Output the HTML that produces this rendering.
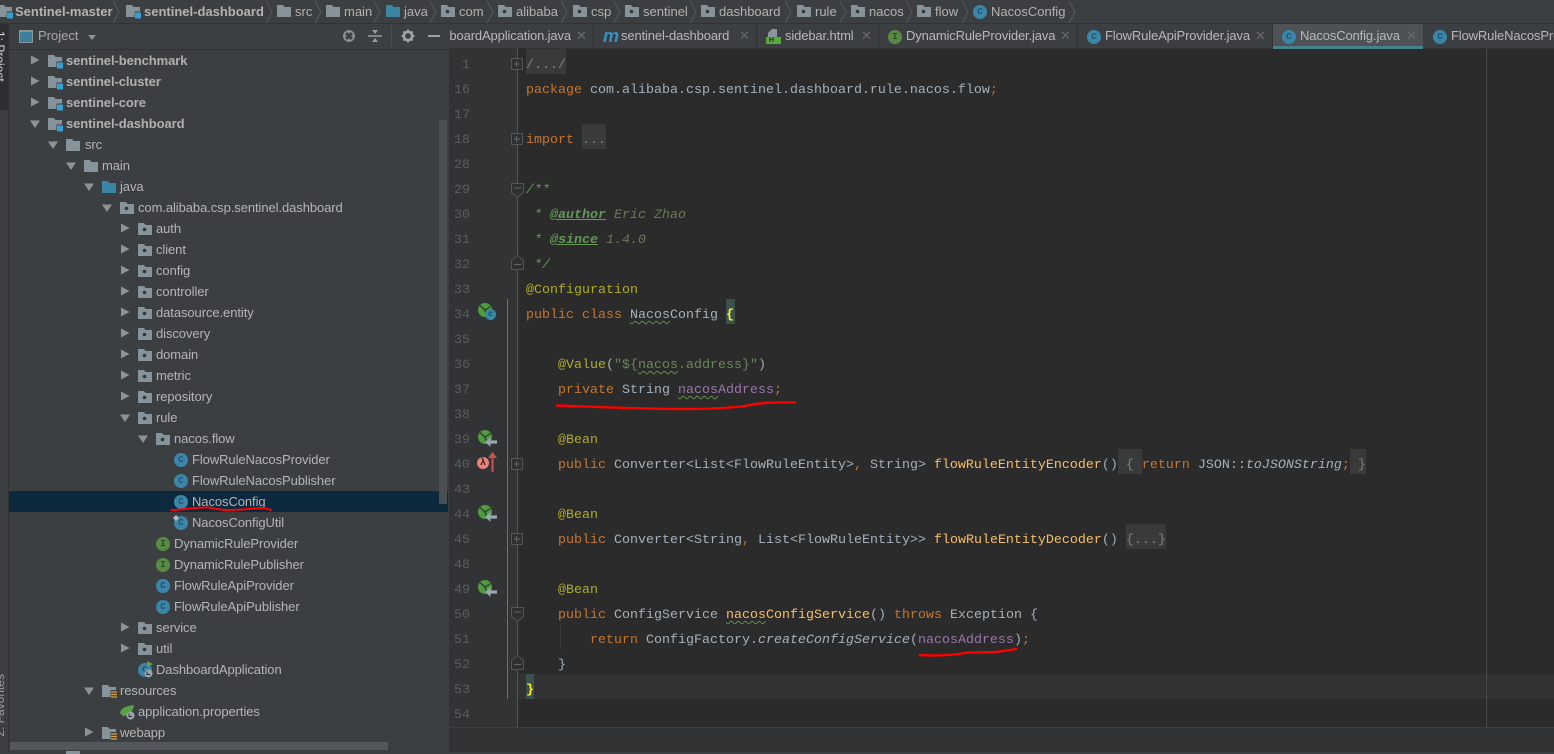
<!DOCTYPE html>
<html><head><meta charset="utf-8"><title>NacosConfig</title>
<style>
html,body{margin:0;padding:0;background:#3c3f41}
body{position:relative;width:1554px;height:752px;overflow:hidden;font-family:"Liberation Sans",sans-serif;font-size:13px;color:#bbb}
.a{position:absolute}
.bc{position:absolute;top:3px;height:18px;line-height:18px;white-space:nowrap;color:#b3b3b3}
.bc.b{font-weight:bold}
.tab{position:absolute;top:27px;height:18px;line-height:18px;white-space:nowrap;color:#b8b8b8;letter-spacing:-.13px}
.x{position:absolute;top:26px;height:20px;line-height:20px;color:#686b6d;font-size:13px}
.dv{position:absolute;top:24px;width:1px;height:24px;background:#323232}
.r{position:absolute;height:21px;line-height:22px;white-space:nowrap;color:#b5b5b5;letter-spacing:-.08px}
.r.b{font-weight:bold;color:#b0b0b0}
.c,.i{position:absolute;width:14px;height:14px;border-radius:50%;font:bold 9px/14px "Liberation Mono",monospace;text-align:center;color:#24536e;background:#3b86a8}
.i{background:#598a44;color:#2c4a24}
.ln{position:absolute;left:449px;width:21px;text-align:right;height:25px;font:13.33px/34px "Liberation Mono",monospace;color:#5a5d5f}
.cd{position:absolute;left:526px;height:25px;white-space:pre;font:13.33px/34px "Liberation Mono",monospace;color:#a3b0bd}
.k{color:#c5762f}.n{color:#b0aa28}.s{color:#6a8759}.f{color:#9876aa}.m{color:#f5be69}
.j{color:#629755;font-style:italic}.jt{font-weight:bold;text-decoration:underline}.jv{color:#6b7a56}
.it{font-style:italic}.dim{color:#808080}
.w{text-decoration:underline wavy #5f8f4f 1px;text-underline-offset:2px}
.fb{position:absolute;background:#393a3a;height:25px}
svg{position:absolute;overflow:visible}
.fold{position:absolute;left:511px;width:12px;height:12px;border:1px solid #555;background:#2f3032;box-sizing:border-box}
.fold:before{content:"";position:absolute;left:2px;top:4px;width:6px;height:2px;background:#666;transform:scaleY(.5)}
.fold.p:after{content:"";position:absolute;left:4px;top:2px;height:6px;width:1px;background:#666}
</style></head><body>
<svg width="0" height="0" style="position:absolute"><defs>
<symbol id="fo" viewBox="0 0 14 12"><path d="M0 0H6L7.500 2H14V12H0Z" fill="#87939a"/></symbol>
<symbol id="fb" viewBox="0 0 14 12"><path d="M0 0H6L7.500 2H14V12H0Z" fill="#3d85a4"/></symbol>
<symbol id="pk" viewBox="0 0 14 12"><path d="M0 0H6L7.500 2H14V12H0Z" fill="#87939a"/><circle cx="6.500" cy="6.500" r="1.800" fill="#33373a"/></symbol>
<symbol id="mo" viewBox="0 0 15 14"><path d="M0 0H6L7.500 2H14V12H0Z" fill="#87939a"/><rect x="8.500" y="6.500" width="6.500" height="7.500" fill="#3c3f41"/><rect x="9" y="7.500" width="6" height="6" fill="#389fd6"/></symbol>
<symbol id="re" viewBox="0 0 15 14"><path d="M0 0H6L7.500 2H14V12H0Z" fill="#87939a"/><rect x="8.500" y="5" width="6.500" height="9" fill="#3c3f41"/><path d="M9 7H15M9 9.500H15M9 12H15" stroke="#d9a343" stroke-width="1.300"/></symbol>
<symbol id="ar" viewBox="0 0 9 10"><path d="M0 .5L8.500 5L0 9.500Z" fill="#8f9294"/></symbol>
<symbol id="ad" viewBox="0 0 10 9"><path d="M0 1.500H10L5 9Z" fill="#8f9294"/></symbol>
<symbol id="sp" viewBox="0 0 14 14"><circle cx="7" cy="7" r="7" fill="#4f9b3f"/><path d="M2 2.500L7 7L12.500 3.500M7 7L9 13" stroke="#2f3a2e" stroke-width="1.300" fill="none"/></symbol>
<symbol id="ov" viewBox="0 0 11 9"><path d="M0 4.500L5 0V3H11V6H5V9Z" fill="#9aa7b0"/></symbol>
</defs></svg>

<!-- top breadcrumb -->
<div class="a" style="left:0;top:0;width:1554px;height:24px;background:#3c3f41"></div>
<div class="a" style="left:0;top:23px;width:1554px;height:1px;background:#323232"></div>
<svg style="left:-2px;top:5px" width="15" height="14"><use href="#mo"/></svg>
<div class="bc b" style="left:15px">Sentinel-master</div>
<svg style="left:126px;top:5px" width="15" height="14"><use href="#mo"/></svg>
<div class="bc b" style="left:144px">sentinel-dashboard</div>
<svg style="left:277px;top:5px" width="14" height="12"><use href="#fo"/></svg><div class="bc" style="left:295px">src</div>
<svg style="left:326px;top:5px" width="14" height="12"><use href="#fo"/></svg><div class="bc" style="left:344px">main</div>
<svg style="left:386px;top:5px" width="14" height="12"><use href="#fb"/></svg><div class="bc" style="left:404px">java</div>
<svg style="left:441px;top:5px" width="14" height="12"><use href="#pk"/></svg><div class="bc" style="left:459px">com</div>
<svg style="left:498px;top:5px" width="14" height="12"><use href="#pk"/></svg><div class="bc" style="left:516px">alibaba</div>
<svg style="left:573px;top:5px" width="14" height="12"><use href="#pk"/></svg><div class="bc" style="left:591px">csp</div>
<svg style="left:625px;top:5px" width="14" height="12"><use href="#pk"/></svg><div class="bc" style="left:643px">sentinel</div>
<svg style="left:701px;top:5px" width="14" height="12"><use href="#pk"/></svg><div class="bc" style="left:719px">dashboard</div>
<svg style="left:797px;top:5px" width="14" height="12"><use href="#pk"/></svg><div class="bc" style="left:815px">rule</div>
<svg style="left:851px;top:5px" width="14" height="12"><use href="#pk"/></svg><div class="bc" style="left:869px">nacos</div>
<svg style="left:917px;top:5px" width="14" height="12"><use href="#pk"/></svg><div class="bc" style="left:935px">flow</div>
<div class="c" style="left:973px;top:5px">C</div><div class="bc" style="left:991px">NacosConfig</div>
<svg style="left:0;top:0" width="1100" height="24" fill="none" stroke="#55585a" stroke-width="1">
<path d="M113 1L119 12L113 23M266 1L272 12L266 23M315 1L321 12L315 23M374 1L380 12L374 23M430 1L436 12L430 23M487 1L493 12L487 23M561 1L567 12L561 23M614 1L620 12L614 23M690 1L696 12L690 23M785 1L791 12L785 23M840 1L846 12L840 23M906 1L912 12L906 23M962 1L968 12L962 23M1069 1L1075 12L1069 23"/></svg>

<!-- left strip -->
<div class="a" style="left:0;top:24px;width:8px;height:728px;background:#3c3f41"></div>
<div class="a" style="left:8px;top:24px;width:1px;height:728px;background:#323232"></div>
<div class="a" style="left:0;top:24px;width:8px;height:86px;background:#2d2f31;overflow:hidden"><div class="a" style="left:-6px;top:7px;writing-mode:vertical-rl;color:#d5d5d5;font-size:12px;line-height:12px;white-space:nowrap">1: Project</div></div>
<div class="a" style="left:0;top:672px;width:8px;height:66px;overflow:hidden"><div class="a" style="left:-6px;top:2px;writing-mode:vertical-rl;transform:rotate(180deg);color:#9a9a9a;font-size:12px;line-height:12px;white-space:nowrap">2: Favorites</div></div>

<!-- project panel header -->
<div class="a" style="left:9px;top:24px;width:440px;height:25px;background:#3c3f41;border-bottom:1px solid #323232"></div>
<div class="a" style="left:19px;top:30px;width:14px;height:13px;box-sizing:border-box;border:1px solid #8b9499;border-top-width:2px;background:#3d7f9c"></div>
<div class="a" style="left:38px;top:27px;line-height:18px;color:#a8a8a8">Project</div>
<svg style="left:88px;top:35px" width="8" height="5"><path d="M0 0H8L4 5Z" fill="#8f9294"/></svg>
<svg style="left:342px;top:29px" width="14" height="14" fill="none" stroke="#8f9294" stroke-width="1.800"><circle cx="7" cy="7" r="5"/><path d="M7 1V4.500M7 9.500V13M1 7H4.500M9.500 7H13"/></svg>
<svg style="left:368px;top:29px" width="14" height="14"><path d="M0 7H14" stroke="#9a9d9f" stroke-width="1.500"/><path d="M4 1H10L7 5ZM4 13H10L7 9Z" fill="#9a9d9f"/></svg>
<div class="a" style="left:391px;top:26px;width:1px;height:20px;background:#4b4e50"></div>
<svg style="left:401px;top:29px" width="14" height="14"><circle cx="7" cy="7" r="4.200" fill="none" stroke="#a0a3a5" stroke-width="2.600"/><path d="M7 .5V3M7 11V13.500M.5 7H3M11 7H13.500M2.400 2.400L4 4M10 10L11.600 11.600M11.600 2.400L10 4M4 10L2.400 11.600" stroke="#a0a3a5" stroke-width="2"/></svg>
<div class="a" style="left:428px;top:35px;width:12px;height:2px;background:#a0a3a5"></div>

<!-- tree -->
<div class="a" style="left:9px;top:491px;width:439px;height:21px;background:#0d293e"></div>
<div class="a" style="left:439px;top:120px;width:8px;height:384px;background:#4f5254;opacity:.9"></div>
<svg style="left:31px;top:55px" width="9" height="10"><use href="#ar"/></svg><svg style="left:48px;top:55px" width="15" height="14"><use href="#mo"/></svg><div class="r b" style="left:66px;top:50px">sentinel-benchmark</div>
<svg style="left:31px;top:76px" width="9" height="10"><use href="#ar"/></svg><svg style="left:48px;top:76px" width="15" height="14"><use href="#mo"/></svg><div class="r b" style="left:66px;top:71px">sentinel-cluster</div>
<svg style="left:31px;top:97px" width="9" height="10"><use href="#ar"/></svg><svg style="left:48px;top:97px" width="15" height="14"><use href="#mo"/></svg><div class="r b" style="left:66px;top:92px">sentinel-core</div>
<svg style="left:30px;top:119px" width="10" height="9"><use href="#ad"/></svg><svg style="left:48px;top:118px" width="15" height="14"><use href="#mo"/></svg><div class="r b" style="left:66px;top:113px">sentinel-dashboard</div>
<svg style="left:48px;top:140px" width="10" height="9"><use href="#ad"/></svg><svg style="left:66px;top:139px" width="14" height="12"><use href="#fo"/></svg><div class="r" style="left:85px;top:134px">src</div>
<svg style="left:66px;top:161px" width="10" height="9"><use href="#ad"/></svg><svg style="left:84px;top:160px" width="14" height="12"><use href="#fo"/></svg><div class="r" style="left:102px;top:155px">main</div>
<svg style="left:84px;top:182px" width="10" height="9"><use href="#ad"/></svg><svg style="left:102px;top:181px" width="14" height="12"><use href="#fb"/></svg><div class="r" style="left:120px;top:176px">java</div>
<svg style="left:102px;top:203px" width="10" height="9"><use href="#ad"/></svg><svg style="left:120px;top:202px" width="14" height="12"><use href="#pk"/></svg><div class="r" style="left:138px;top:197px">com.alibaba.csp.sentinel.dashboard</div>
<svg style="left:121px;top:223px" width="9" height="10"><use href="#ar"/></svg><svg style="left:138px;top:223px" width="14" height="12"><use href="#pk"/></svg><div class="r" style="left:156px;top:218px">auth</div>
<svg style="left:121px;top:244px" width="9" height="10"><use href="#ar"/></svg><svg style="left:138px;top:244px" width="14" height="12"><use href="#pk"/></svg><div class="r" style="left:156px;top:239px">client</div>
<svg style="left:121px;top:265px" width="9" height="10"><use href="#ar"/></svg><svg style="left:138px;top:265px" width="14" height="12"><use href="#pk"/></svg><div class="r" style="left:156px;top:260px">config</div>
<svg style="left:121px;top:286px" width="9" height="10"><use href="#ar"/></svg><svg style="left:138px;top:286px" width="14" height="12"><use href="#pk"/></svg><div class="r" style="left:156px;top:281px">controller</div>
<svg style="left:121px;top:307px" width="9" height="10"><use href="#ar"/></svg><svg style="left:138px;top:307px" width="14" height="12"><use href="#pk"/></svg><div class="r" style="left:156px;top:302px">datasource.entity</div>
<svg style="left:121px;top:328px" width="9" height="10"><use href="#ar"/></svg><svg style="left:138px;top:328px" width="14" height="12"><use href="#pk"/></svg><div class="r" style="left:156px;top:323px">discovery</div>
<svg style="left:121px;top:349px" width="9" height="10"><use href="#ar"/></svg><svg style="left:138px;top:349px" width="14" height="12"><use href="#pk"/></svg><div class="r" style="left:156px;top:344px">domain</div>
<svg style="left:121px;top:370px" width="9" height="10"><use href="#ar"/></svg><svg style="left:138px;top:370px" width="14" height="12"><use href="#pk"/></svg><div class="r" style="left:156px;top:365px">metric</div>
<svg style="left:121px;top:391px" width="9" height="10"><use href="#ar"/></svg><svg style="left:138px;top:391px" width="14" height="12"><use href="#pk"/></svg><div class="r" style="left:156px;top:386px">repository</div>
<svg style="left:120px;top:413px" width="10" height="9"><use href="#ad"/></svg><svg style="left:138px;top:412px" width="14" height="12"><use href="#pk"/></svg><div class="r" style="left:156px;top:407px">rule</div>
<svg style="left:138px;top:434px" width="10" height="9"><use href="#ad"/></svg><svg style="left:156px;top:433px" width="14" height="12"><use href="#pk"/></svg><div class="r" style="left:174px;top:428px">nacos.flow</div>
<div class="c" style="left:174px;top:453px">C</div><div class="r" style="left:192px;top:449px">FlowRuleNacosProvider</div>
<div class="c" style="left:174px;top:474px">C</div><div class="r" style="left:192px;top:470px">FlowRuleNacosPublisher</div>
<div class="c" style="left:174px;top:495px">C</div><div class="r" style="left:192px;top:491px">NacosConfig</div>
<div class="c" style="left:174px;top:516px">C</div><svg style="left:173px;top:515px" width="6" height="6"><path d="M0 3L3 0L6 3L3 6Z" fill="#b9bcbe"/></svg><div class="r" style="left:192px;top:512px">NacosConfigUtil</div>
<div class="i" style="left:156px;top:537px">I</div><div class="r" style="left:174px;top:533px">DynamicRuleProvider</div>
<div class="i" style="left:156px;top:558px">I</div><div class="r" style="left:174px;top:554px">DynamicRulePublisher</div>
<div class="c" style="left:156px;top:579px">C</div><div class="r" style="left:174px;top:575px">FlowRuleApiProvider</div>
<div class="c" style="left:156px;top:600px">C</div><div class="r" style="left:174px;top:596px">FlowRuleApiPublisher</div>
<svg style="left:121px;top:622px" width="9" height="10"><use href="#ar"/></svg><svg style="left:138px;top:622px" width="14" height="12"><use href="#pk"/></svg><div class="r" style="left:156px;top:617px">service</div>
<svg style="left:121px;top:643px" width="9" height="10"><use href="#ar"/></svg><svg style="left:138px;top:643px" width="14" height="12"><use href="#pk"/></svg><div class="r" style="left:156px;top:638px">util</div>
<div class="c" style="left:138px;top:663px">C</div><svg style="left:146px;top:661px" width="8" height="8"><path d="M1 0L7 3L1 6Z" fill="#59a83f"/></svg><svg style="left:144px;top:669px" width="9" height="9"><circle cx="4.500" cy="4.500" r="4" fill="#9aa3a8"/><path d="M3 2.500V5.500H6" stroke="#2f3234" fill="none"/></svg><div class="r" style="left:156px;top:659px">DashboardApplication</div>
<svg style="left:84px;top:686px" width="10" height="9"><use href="#ad"/></svg><svg style="left:102px;top:685px" width="15" height="14"><use href="#re"/></svg><div class="r" style="left:120px;top:680px">resources</div>
<svg style="left:120px;top:705px" width="14" height="12"><path d="M0 8C1 3 6 1 14 0C13 6 10 11 3 11Z" fill="#5aa345"/></svg><svg style="left:126px;top:711px" width="9" height="9"><circle cx="4.500" cy="4.500" r="4" fill="#9aa3a8"/><path d="M3 2.500V5.500H6" stroke="#2f3234" fill="none"/></svg><div class="r" style="left:138px;top:701px">application.properties</div>
<svg style="left:85px;top:727px" width="9" height="10"><use href="#ar"/></svg><svg style="left:102px;top:727px" width="15" height="14"><use href="#re"/></svg><div class="r" style="left:120px;top:722px">webapp</div>
<div class="a" style="left:9px;top:742px;width:439px;height:10px;background:#3c3f41"></div>
<div class="a" style="left:10px;top:742px;width:378px;height:8px;background:#53565a"></div>
<svg style="left:66px;top:751px" width="14" height="3"><rect width="14" height="3" fill="#87939a"/></svg>

<!-- red underline in tree -->
<svg style="left:0;top:0" width="1554" height="752" fill="none" stroke="#f00" stroke-linecap="round"><path stroke-width="2" d="M171 510C185 510 195 507 207 507.500C215 508 218 510 228 510C245 510 255 508 262 508C266 508 270 510 271 510"/></svg>

<!-- tabs -->
<div class="a" style="left:449px;top:24px;width:1105px;height:24px;background:#3c3f41"></div>
<div class="a" style="left:449px;top:48px;width:1105px;height:1px;background:#323232"></div>
<div class="a" style="left:1273px;top:24px;width:150px;height:22px;background:#4e5254"></div>
<div class="a" style="left:1273px;top:46px;width:150px;height:3px;background:#4a7f90"></div>
<div class="a" style="left:449px;top:24px;width:122px;height:24px;overflow:hidden"><div class="tab" style="right:0;top:3px">DashboardApplication.java</div></div>
<div class="x" style="left:576px">✕</div><div class="dv" style="left:593px"></div>
<div class="a" style="left:603px;top:27px;font:italic bold 18px/18px 'Liberation Sans',sans-serif;color:#3592c4">m</div>
<div class="tab" style="left:621px">sentinel-dashboard</div><div class="x" style="left:739px">✕</div><div class="dv" style="left:756px"></div>
<svg style="left:766px;top:29px" width="15" height="16"><path d="M6 0H11V8H2V4Z" fill="#8b9499"/><rect y="8" width="15" height="7" fill="#59a83f"/></svg>
<div class="a" style="left:769px;top:37px;font:bold 7px/8px 'Liberation Sans',sans-serif;color:#26391f">H</div>
<div class="tab" style="left:785px">sidebar.html</div><div class="x" style="left:861px">✕</div><div class="dv" style="left:878px"></div>
<div class="i" style="left:888px;top:30px">I</div><div class="tab" style="left:906px">DynamicRuleProvider.java</div><div class="x" style="left:1060px">✕</div><div class="dv" style="left:1077px"></div>
<div class="c" style="left:1087px;top:30px">C</div><div class="tab" style="left:1105px">FlowRuleApiProvider.java</div><div class="x" style="left:1255px">✕</div><div class="dv" style="left:1272px"></div>
<div class="c" style="left:1282px;top:30px">C</div><div class="tab" style="left:1300px">NacosConfig.java</div><div class="x" style="left:1406px">✕</div>
<div class="c" style="left:1433px;top:30px">C</div><div class="tab" style="left:1451px">FlowRuleNacosProvider.java</div>

<!-- editor -->
<div class="a" style="left:449px;top:49px;width:1105px;height:678px;background:#2b2b2b"></div>
<div class="a" style="left:449px;top:49px;width:68px;height:678px;background:#313335"></div>
<div class="a" style="left:518px;top:674px;width:1036px;height:25px;background:#323232"></div>
<div class="a" style="left:517px;top:49px;width:1px;height:678px;background:#555"></div>
<div class="a" style="left:507px;top:299px;width:1px;height:400px;background:#4f8078"></div>
<div class="a" style="left:1486px;top:49px;width:1px;height:678px;background:#4a4a4a"></div>
<div class="a" style="left:560px;top:625px;width:1px;height:25px;background:#3b3b3b"></div>
<div class="a" style="left:449px;top:727px;width:1105px;height:25px;background:#313335;border-top:1px solid #3c3f41;box-sizing:border-box"></div>

<div class="fb" style="left:526px;top:49px;width:40px"></div>
<div class="fb" style="left:582px;top:124px;width:24px"></div>
<div class="fb" style="left:1118px;top:449px;width:24px"></div>
<div class="fb" style="left:1350px;top:449px;width:16px"></div>
<div class="fb" style="left:1126px;top:524px;width:40px"></div>
<div class="a" style="left:726px;top:299px;width:9px;height:25px;background:#3b514d"></div>
<div class="a" style="left:526px;top:674px;width:8px;height:25px;background:#3b514d"></div>

<div class="ln" style="top:49px">1</div>
<div class="ln" style="top:74px">16</div>
<div class="ln" style="top:99px">17</div>
<div class="ln" style="top:124px">18</div>
<div class="ln" style="top:149px">28</div>
<div class="ln" style="top:174px">29</div>
<div class="ln" style="top:199px">30</div>
<div class="ln" style="top:224px">31</div>
<div class="ln" style="top:249px">32</div>
<div class="ln" style="top:274px">33</div>
<div class="ln" style="top:299px">34</div>
<div class="ln" style="top:324px">35</div>
<div class="ln" style="top:349px">36</div>
<div class="ln" style="top:374px">37</div>
<div class="ln" style="top:399px">38</div>
<div class="ln" style="top:424px">39</div>
<div class="ln" style="top:449px">40</div>
<div class="ln" style="top:474px">43</div>
<div class="ln" style="top:499px">44</div>
<div class="ln" style="top:524px">45</div>
<div class="ln" style="top:549px">48</div>
<div class="ln" style="top:574px">49</div>
<div class="ln" style="top:599px">50</div>
<div class="ln" style="top:624px">51</div>
<div class="ln" style="top:649px">52</div>
<div class="ln" style="top:674px">53</div>
<div class="ln" style="top:699px">54</div>

<div class="fold p" style="top:58px"></div>
<div class="fold p" style="top:133px"></div>
<svg style="left:511px;top:183px" width="13" height="15"><path d="M.5 .5H12.500V9.500L6.500 14.500L.5 9.500Z" fill="#2f3032" stroke="#555"/><path d="M3 5H10" stroke="#666"/></svg>
<svg style="left:511px;top:255px" width="13" height="15"><path d="M.5 14.500H12.500V5.500L6.500 .5L.5 5.500Z" fill="#2f3032" stroke="#555"/><path d="M3 9.500H10" stroke="#666"/></svg>
<div class="fold p" style="top:458px"></div>
<div class="fold p" style="top:533px"></div>
<svg style="left:511px;top:607px" width="13" height="15"><path d="M.5 .5H12.500V9.500L6.500 14.500L.5 9.500Z" fill="#2f3032" stroke="#555"/><path d="M3 5H10" stroke="#666"/></svg>
<svg style="left:511px;top:655px" width="13" height="15"><path d="M.5 14.500H12.500V5.500L6.500 .5L.5 5.500Z" fill="#2f3032" stroke="#555"/><path d="M3 9.500H10" stroke="#666"/></svg>

<!-- gutter icons -->
<svg style="left:478px;top:303px" width="14" height="14"><use href="#sp"/></svg>
<div class="a" style="left:485px;top:309px;width:11px;height:11px;border-radius:50%;background:#3b86a8;font:bold 8px/11px 'Liberation Mono',monospace;text-align:center;color:#1f4a62">c</div>
<svg style="left:478px;top:430px" width="14" height="14"><use href="#sp"/></svg><svg style="left:485px;top:437px" width="12" height="10"><use href="#ov"/></svg>
<svg style="left:478px;top:505px" width="14" height="14"><use href="#sp"/></svg><svg style="left:485px;top:512px" width="12" height="10"><use href="#ov"/></svg>
<svg style="left:478px;top:580px" width="14" height="14"><use href="#sp"/></svg><svg style="left:485px;top:587px" width="12" height="10"><use href="#ov"/></svg>
<div class="a" style="left:477px;top:457px;width:12px;height:12px;border-radius:50%;background:#e8837a;font:bold 10px/12px 'Liberation Sans',sans-serif;text-align:center;color:#4a1f1c">λ</div>
<svg style="left:488px;top:452px" width="9" height="20"><path d="M4.500 20V3" stroke="#c75450" stroke-width="2"/><path d="M0 6L4.500 0L9 6Z" fill="#c75450"/></svg>

<!-- code -->
<div class="cd dim" style="top:49px">/.../</div>
<div class="cd" style="top:74px"><span class="k">package</span> com.alibaba.csp.sentinel.dashboard.rule.nacos.flow<span class="k">;</span></div>
<div class="cd" style="top:124px"><span class="k">import</span> <span class="dim">...</span></div>
<div class="cd j" style="top:174px">/**</div>
<div class="cd j" style="top:199px"> * <span class="jt">@author</span> <span class="jv">Eric Zhao</span></div>
<div class="cd j" style="top:224px"> * <span class="jt">@since</span> <span class="jv">1.4.0</span></div>
<div class="cd j" style="top:249px"> */</div>
<div class="cd n" style="top:274px">@Configuration</div>
<div class="cd" style="top:299px"><span class="k">public class</span> <span class="w">Nacos</span>Config <b style="color:#ffef28">{</b></div>
<div class="cd" style="top:349px">    <span class="n">@Value</span>(<span class="s">"${<span class="w">nacos</span>.address}"</span>)</div>
<div class="cd" style="top:374px">    <span class="k">private</span> String <span class="f"><span class="w">nacos</span>Address</span><span class="k">;</span></div>
<div class="cd" style="top:424px">    <span class="n">@Bean</span></div>
<div class="cd" style="top:449px">    <span class="k">public</span> Converter&lt;List&lt;FlowRuleEntity&gt;<span class="k">,</span> String&gt; <span class="m">flowRuleEntityEncoder</span>() <span class="dim">{</span> <span class="k">return</span> JSON::<span class="it">toJSONString</span><span class="k">;</span> <span class="dim">}</span></div>
<div class="cd" style="top:499px">    <span class="n">@Bean</span></div>
<div class="cd" style="top:524px">    <span class="k">public</span> Converter&lt;String<span class="k">,</span> List&lt;FlowRuleEntity&gt;&gt; <span class="m">flowRuleEntityDecoder</span>() <span class="dim">{...}</span></div>
<div class="cd" style="top:574px">    <span class="n">@Bean</span></div>
<div class="cd" style="top:599px">    <span class="k">public</span> ConfigService <span class="m"><span class="w">nacos</span>ConfigService</span>() <span class="k">throws</span> Exception {</div>
<div class="cd" style="top:624px">        <span class="k">return</span> ConfigFactory.<span class="it">createConfigService</span>(<span class="f">nacosAddress</span>)<span class="k">;</span></div>
<div class="cd" style="top:649px">    }</div>
<div class="cd" style="top:674px"><b style="color:#ffef28">}</b></div>

<!-- red pen marks -->
<svg style="left:0;top:0" width="1554" height="752" fill="none" stroke="#f00" stroke-linecap="round">
<path stroke-width="2.400" d="M557 405.500C600 407 640 409 680 409C720 409 740 407 750 405C765 402 780 402.500 795 402.500"/>
<path stroke-width="2.400" d="M920 655C935 656 950 655.500 965 653C975 651.500 985 653 995 652C1005 651 1010 650 1016 649"/>
</svg>
</body></html>
